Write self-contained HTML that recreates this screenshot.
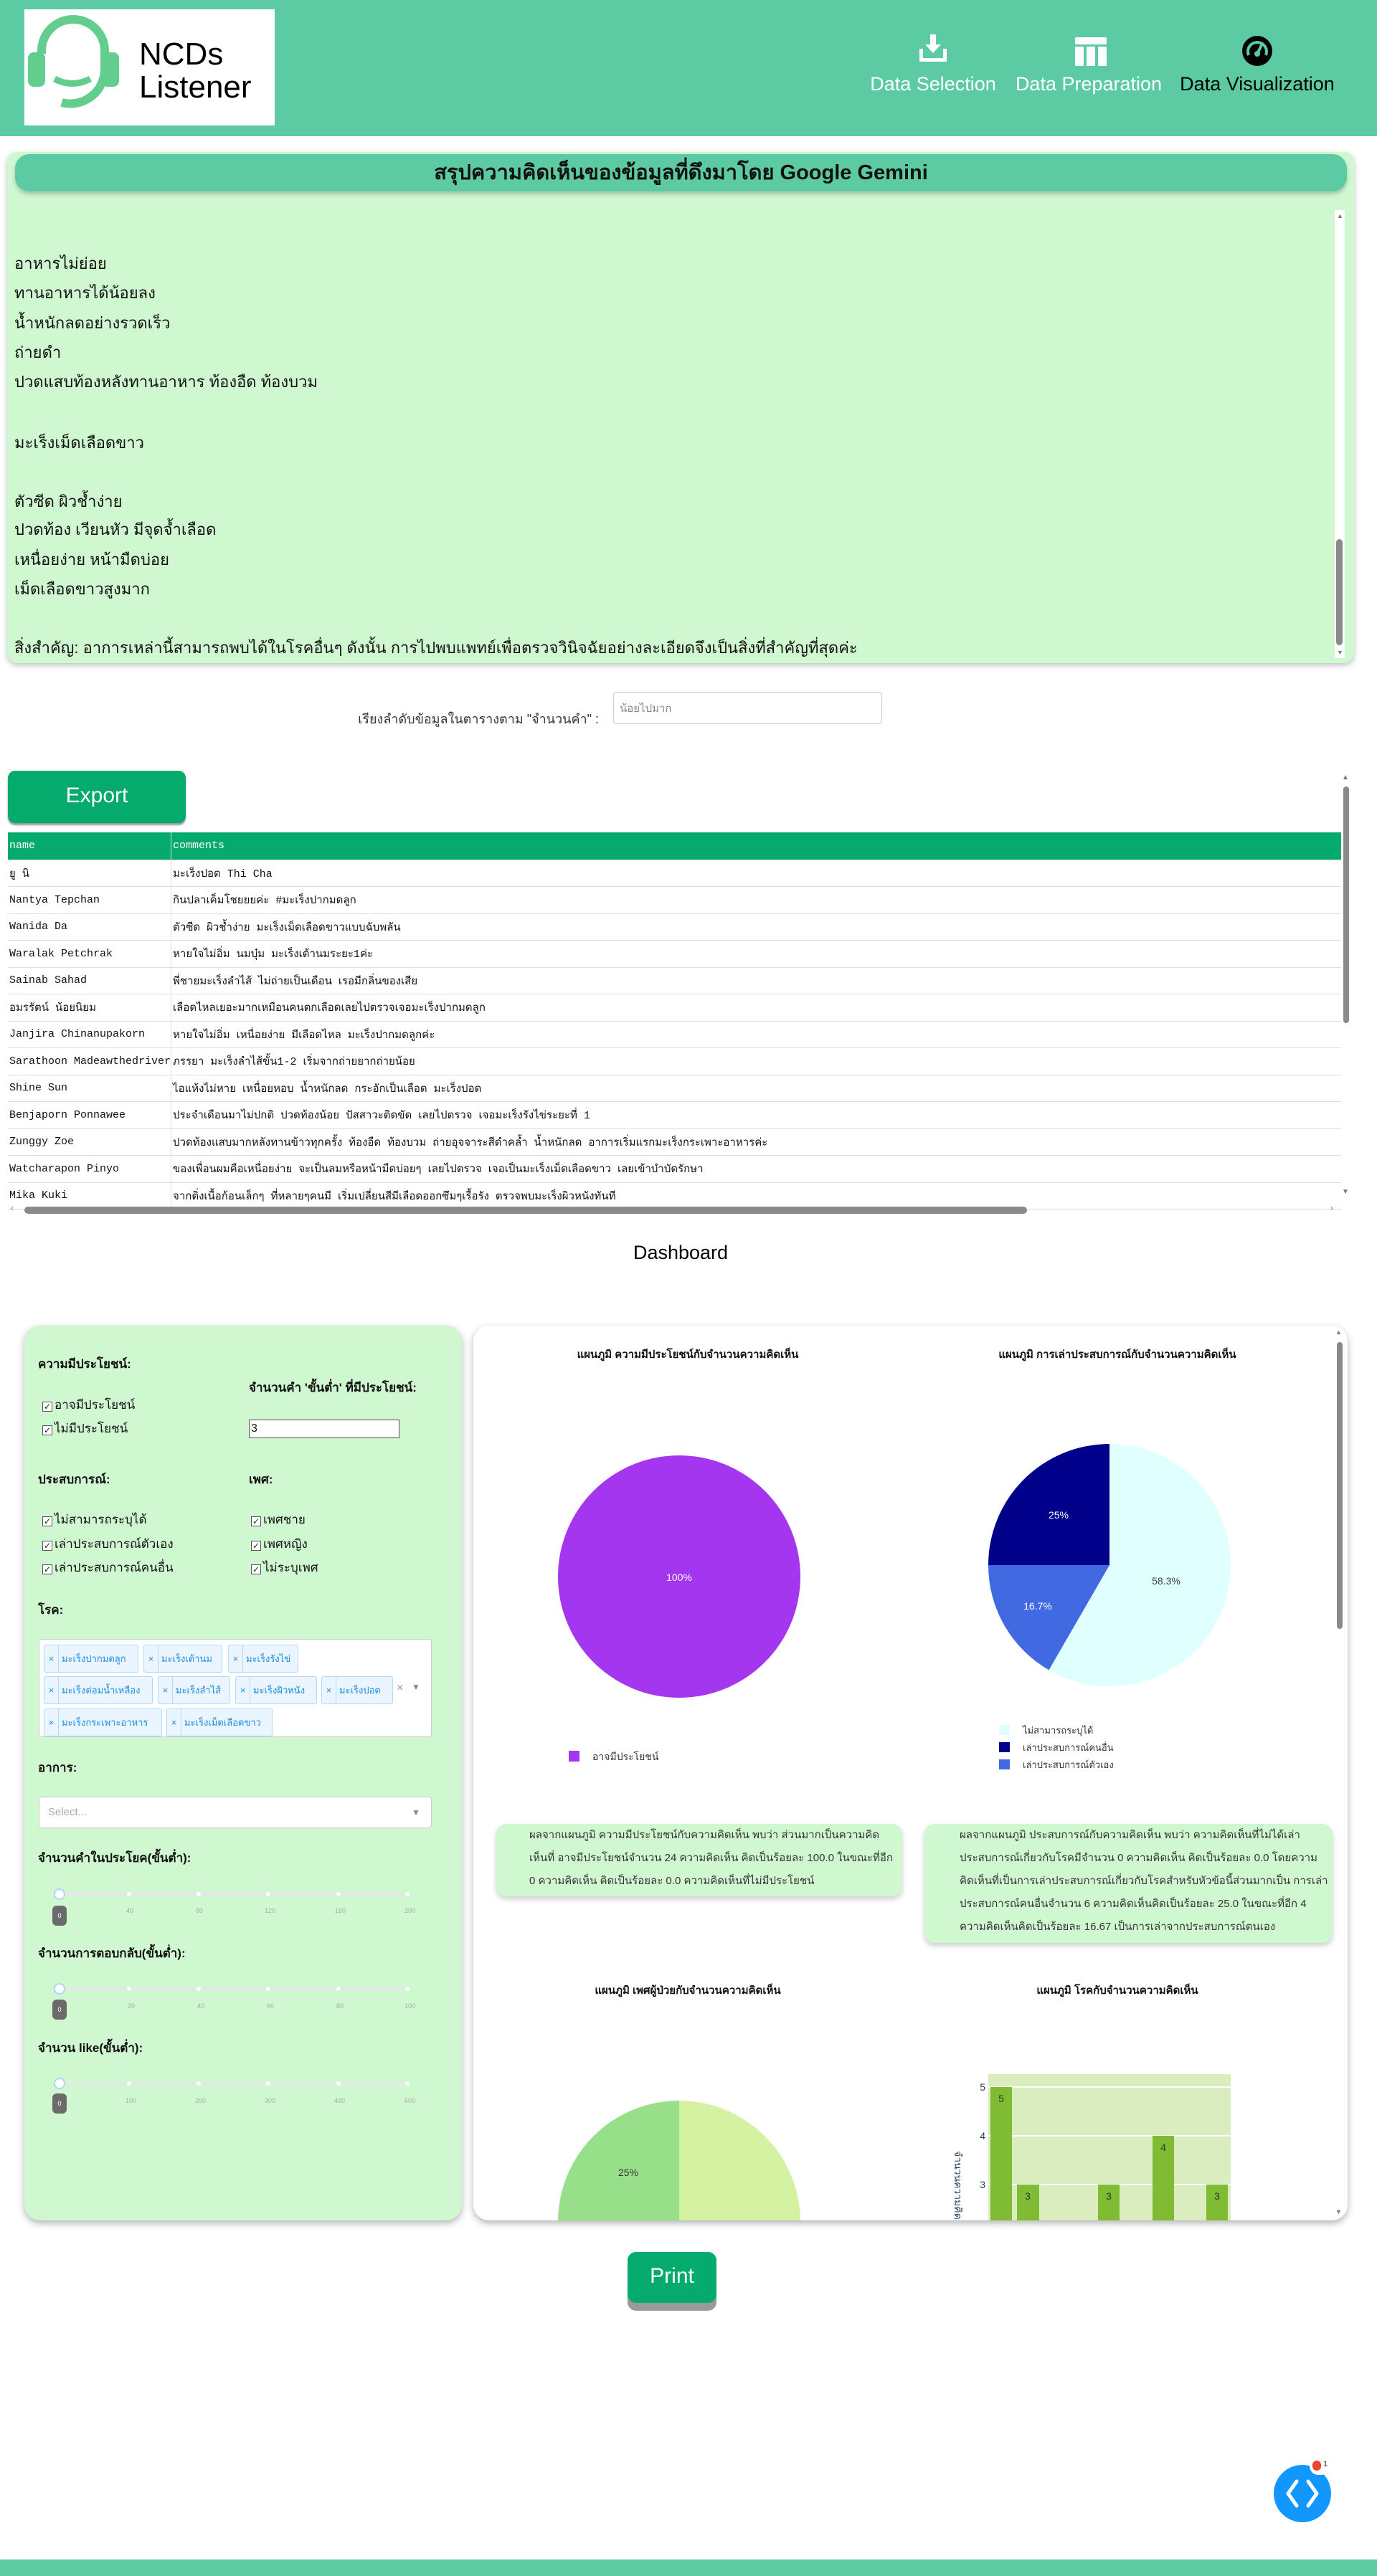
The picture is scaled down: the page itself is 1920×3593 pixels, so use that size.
<!DOCTYPE html>
<html><head><meta charset="utf-8">
<style>
*{margin:0;padding:0;box-sizing:border-box}
html,body{width:1920px;height:3593px;overflow:hidden;background:#fff;font-family:"Liberation Sans","DejaVu Sans",sans-serif;color:#111;position:relative}
.a{position:absolute}
.hdr{left:0;top:0;width:1920px;height:190px;background:#5ccba3}
.logo{left:34px;top:13px;width:349px;height:162px;background:#fff}
.nav{color:#fff;font-size:27px;text-align:center;white-space:nowrap}
.card{left:10px;top:212px;width:1878px;height:713px;background:#cff7d0;border-radius:14px;box-shadow:0 3px 8px rgba(0,0,0,.25)}
.ttl{left:21px;top:215px;width:1857px;height:52px;background:#5ccba3;border-radius:20px;box-shadow:0 4px 6px rgba(0,0,0,.2);font-size:29px;font-weight:bold;text-align:center;line-height:52px}
.ln{left:20px;font-size:22px;white-space:nowrap}
.sb{background:#fff;width:14px}
.thumb{background:#8a8a8a;border-radius:5px}
table{border-collapse:collapse;font-family:"Liberation Mono","DejaVu Sans Mono",monospace;font-size:15px}
td{height:37.5px;border-bottom:1px solid #ddd;padding-left:2px;white-space:nowrap;vertical-align:middle}
td:first-child{width:227px;border-right:1px solid #ddd}
tr.h td{background:#05aa6d;color:#fff;height:38px}
.lp{left:34px;top:1849px;width:610px;height:1248px;background:#cff7d0;border-radius:22px;box-shadow:0 4px 10px rgba(0,0,0,.3)}
.rp{left:660px;top:1849px;width:1219px;height:1248px;background:#fff;border-radius:22px;box-shadow:0 4px 10px rgba(0,0,0,.3);overflow:hidden}
.lb{font-weight:bold;font-size:17px;white-space:nowrap}
.cb{font-size:17px;white-space:nowrap}
.cb i{display:inline-block;width:14px;height:14px;border:1px solid #555;background:#fff;font-style:normal;font-size:12px;line-height:12px;text-align:center;margin-right:3px;vertical-align:-1px;color:#222}
.tag{position:absolute;height:39px;background:#ebf5ff;border:1px solid #b3d8ff;border-radius:3px;color:#1c8de0;font-size:13px;line-height:37px;white-space:nowrap;overflow:hidden}
.tag b{display:inline-block;width:20px;text-align:center;font-weight:normal;border-right:1px solid #b3d8ff;margin-right:4px}
.trk{height:4px;background:#e6e6e6;width:486px;left:83px}
.dot{width:6px;height:6px;border-radius:3px;background:#fff;top:-1px}
.tick{font-size:9px;color:#aaa}
.hdl{width:16px;height:16px;border-radius:8px;background:#fff;border:2px solid #a8d8ff;left:75px;top:-6px}
.val{width:20px;height:28px;background:#6b6b6b;border-radius:6px;color:#fff;font-size:9px;text-align:center;line-height:28px;left:73px}
.ct{font-size:15px;font-weight:bold;white-space:nowrap;transform:translateX(-50%)}
.tb{background:#cff7d0;border-radius:14px;box-shadow:0 4px 8px rgba(0,0,0,.2);font-size:15px;line-height:32px;color:#333}
</style></head><body>

<div class="a hdr"></div>
<div class="a logo">
 <svg class="a" style="left:0;top:0" width="150" height="162" viewBox="0 0 150 162">
  <path d="M52 130 A48 48 0 0 0 112 84 L112 58 A44 44 0 0 0 24 58 L24 62" fill="none" stroke="#63cd8e" stroke-width="12"/>
  <rect x="5" y="60" width="24" height="48" rx="8" fill="#63cd8e"/>
  <rect x="108" y="60" width="24" height="48" rx="8" fill="#63cd8e"/>
  <path d="M42 97 Q67 110 92 97" fill="none" stroke="#63cd8e" stroke-width="9"/>
 </svg>
 <div class="a" style="left:160px;top:40px;font-size:44px;line-height:46px;color:#000">NCDs<br>Listener</div>
</div>
<svg class="a" style="left:1280px;top:48px" width="42" height="40" viewBox="0 0 42 40"><path d="M17 0h8v14h7L21 26 10 14h7z" fill="#fff"/><path d="M2 20v18h38V20h-5v13H7V20z" fill="#fff"/></svg>
<div class="a nav" style="left:1301px;top:102px;transform:translateX(-50%)">Data Selection</div>
<svg class="a" style="left:1499px;top:52px" width="44" height="40" viewBox="0 0 44 40"><rect x="0" y="0" width="44" height="10" rx="2" fill="#fff"/><rect x="0" y="13" width="12" height="27" rx="1" fill="#fff"/><rect x="16" y="13" width="12" height="27" fill="#fff"/><rect x="32" y="13" width="12" height="27" rx="1" fill="#fff"/></svg>
<div class="a nav" style="left:1518px;top:102px;transform:translateX(-50%)">Data Preparation</div>
<svg class="a" style="left:1731px;top:49px" width="44" height="44" viewBox="0 0 44 44"><ellipse cx="22" cy="22" rx="21" ry="21" fill="#000"/><path d="M10 28 A13 13 0 1 1 34 28" fill="none" stroke="#5ccba3" stroke-width="4"/><path d="M22 26 L29 12" stroke="#5ccba3" stroke-width="4"/><circle cx="22" cy="26" r="4" fill="#5ccba3"/></svg>
<div class="a nav" style="left:1753px;top:102px;transform:translateX(-50%);color:#000">Data Visualization</div>

<div class="a card"></div>
<div class="a ttl">สรุปความคิดเห็นของข้อมูลที่ดึงมาโดย Google Gemini</div>
<div class="a sb" style="left:1861px;top:293px;height:625px"></div>
<div class="a" style="left:1864px;top:296px;font-size:9px;color:#777">▲</div>
<div class="a" style="left:1864px;top:905px;font-size:9px;color:#777">▼</div>
<div class="a thumb" style="left:1863px;top:752px;width:9px;height:148px"></div>
<div class="a ln" style="top:350px">อาหารไม่ย่อย</div>
<div class="a ln" style="top:391px">ทานอาหารได้น้อยลง</div>
<div class="a ln" style="top:433px">น้ำหนักลดอย่างรวดเร็ว</div>
<div class="a ln" style="top:474px">ถ่ายดำ</div>
<div class="a ln" style="top:515px">ปวดแสบท้องหลังทานอาหาร ท้องอืด ท้องบวม</div>
<div class="a ln" style="top:600px">มะเร็งเม็ดเลือดขาว</div>
<div class="a ln" style="top:682px">ตัวซีด ผิวช้ำง่าย</div>
<div class="a ln" style="top:721px">ปวดท้อง เวียนหัว มีจุดจ้ำเลือด</div>
<div class="a ln" style="top:763px">เหนื่อยง่าย หน้ามืดบ่อย</div>
<div class="a ln" style="top:804px">เม็ดเลือดขาวสูงมาก</div>
<div class="a ln" style="top:886px">สิ่งสำคัญ: อาการเหล่านี้สามารถพบได้ในโรคอื่นๆ ดังนั้น การไปพบแพทย์เพื่อตรวจวินิจฉัยอย่างละเอียดจึงเป็นสิ่งที่สำคัญที่สุดค่ะ</div>

<div class="a" style="right:1085px;top:988px;font-size:18px;color:#333;white-space:nowrap">เรียงลำดับข้อมูลในตารางตาม "จำนวนคำ" :</div>
<div class="a" style="left:855px;top:965px;width:375px;height:45px;border:1px solid #ccc;border-radius:4px;background:#fff;font-size:15px;color:#888;padding:10px 0 0 8px">น้อยไปมาก</div>

<div class="a" style="left:11px;top:1075px;width:248px;height:73px;background:#05aa6d;border-radius:10px;box-shadow:0 3px 2px #999;color:#fff;font-size:30px;text-align:center;line-height:70px">Export</div>

<div class="a" style="left:11px;top:1161px;width:1859px;height:526px;overflow:hidden">
<table style="width:1859px">
<tr class="h"><td>name</td><td>comments</td></tr>
<tr><td>ยู นิ</td><td>มะเร็งปอด Thi Cha</td></tr>
<tr><td>Nantya Tepchan</td><td>กินปลาเค็มโชยยยค่ะ #มะเร็งปากมดลูก</td></tr>
<tr><td>Wanida Da</td><td>ตัวซีด ผิวช้ำง่าย มะเร็งเม็ดเลือดขาวแบบฉับพลัน</td></tr>
<tr><td>Waralak Petchrak</td><td>หายใจไม่อิ่ม นมบุ๋ม มะเร็งเต้านมระยะ1ค่ะ</td></tr>
<tr><td>Sainab Sahad</td><td>พี่ชายมะเร็งลำไส้ ไม่ถ่ายเป็นเดือน เรอมีกลิ่นของเสีย</td></tr>
<tr><td>อมรรัตน์ น้อยนิยม</td><td>เลือดไหลเยอะมากเหมือนคนตกเลือดเลยไปตรวจเจอมะเร็งปากมดลูก</td></tr>
<tr><td>Janjira Chinanupakorn</td><td>หายใจไม่อิ่ม เหนื่อยง่าย มีเลือดไหล มะเร็งปากมดลูกค่ะ</td></tr>
<tr><td>Sarathoon Madeawthedriver</td><td>ภรรยา มะเร็งลำไส้ขั้น1-2 เริ่มจากถ่ายยากถ่ายน้อย</td></tr>
<tr><td>Shine Sun</td><td>ไอแห้งไม่หาย เหนื่อยหอบ น้ำหนักลด กระอักเป็นเลือด มะเร็งปอด</td></tr>
<tr><td>Benjaporn Ponnawee</td><td>ประจำเดือนมาไม่ปกติ ปวดท้องน้อย ปัสสาวะติดขัด เลยไปตรวจ เจอมะเร็งรังไข่ระยะที่ 1</td></tr>
<tr><td>Zunggy Zoe</td><td>ปวดท้องแสบมากหลังทานข้าวทุกครั้ง ท้องอืด ท้องบวม ถ่ายอุจจาระสีดำคล้ำ น้ำหนักลด อาการเริ่มแรกมะเร็งกระเพาะอาหารค่ะ</td></tr>
<tr><td>Watcharapon Pinyo</td><td>ของเพื่อนผมคือเหนื่อยง่าย จะเป็นลมหรือหน้ามืดบ่อยๆ เลยไปตรวจ เจอเป็นมะเร็งเม็ดเลือดขาว เลยเข้าบำบัดรักษา</td></tr>
<tr><td>Mika Kuki</td><td>จากติ่งเนื้อก้อนเล็กๆ ที่หลายๆคนมี เริ่มเปลี่ยนสีมีเลือดออกซึมๆเรื้อรัง ตรวจพบมะเร็งผิวหนังทันที</td></tr>
</table></div>
<div class="a sb" style="left:1870px;top:1075px;height:600px"></div>
<div class="a thumb" style="left:1873px;top:1097px;width:8px;height:330px"></div>
<div class="a" style="left:1871px;top:1079px;font-size:10px;color:#777">▲</div>
<div class="a" style="left:1871px;top:1657px;font-size:10px;color:#777">▼</div>
<div class="a thumb" style="left:34px;top:1683px;width:1398px;height:10px"></div>
<div class="a" style="left:15px;top:1678px;font-size:12px;color:#777">‹</div>
<div class="a" style="left:1855px;top:1678px;font-size:12px;color:#777">›</div>

<div class="a" style="left:949px;top:1732px;transform:translateX(-50%);font-size:27px;color:#000">Dashboard</div>

<div class="a lp"></div>
<div class="a lb" style="left:53px;top:1889px">ความมีประโยชน์:</div>
<div class="a lb" style="left:347px;top:1922px">จำนวนคำ 'ขั้นต่ำ' ที่มีประโยชน์:</div>
<div class="a cb" style="left:59px;top:1946px"><i>✓</i>อาจมีประโยชน์</div>
<div class="a cb" style="left:59px;top:1979px"><i>✓</i>ไม่มีประโยชน์</div>
<div class="a" style="left:347px;top:1980px;width:210px;height:26px;background:#fff;border:1px solid #555;font-size:16px;padding:3px 2px">3</div>
<div class="a lb" style="left:53px;top:2050px">ประสบการณ์:</div>
<div class="a lb" style="left:347px;top:2050px">เพศ:</div>
<div class="a cb" style="left:59px;top:2106px"><i>✓</i>ไม่สามารถระบุได้</div>
<div class="a cb" style="left:59px;top:2140px"><i>✓</i>เล่าประสบการณ์ตัวเอง</div>
<div class="a cb" style="left:59px;top:2173px"><i>✓</i>เล่าประสบการณ์คนอื่น</div>
<div class="a cb" style="left:350px;top:2106px"><i>✓</i>เพศชาย</div>
<div class="a cb" style="left:350px;top:2140px"><i>✓</i>เพศหญิง</div>
<div class="a cb" style="left:350px;top:2173px"><i>✓</i>ไม่ระบุเพศ</div>
<div class="a lb" style="left:53px;top:2232px">โรค:</div>
<div class="a" style="left:54px;top:2286px;width:548px;height:137px;background:#fff;border:1px solid #ccc;border-radius:4px"></div>
<div class="tag" style="left:61px;top:2294px;width:132px"><b>×</b>มะเร็งปากมดลูก</div>
<div class="tag" style="left:200px;top:2294px;width:110px"><b>×</b>มะเร็งเต้านม</div>
<div class="tag" style="left:318px;top:2294px;width:98px"><b>×</b>มะเร็งรังไข่</div>
<div class="tag" style="left:61px;top:2338px;width:152px"><b>×</b>มะเร็งต่อมน้ำเหลือง</div>
<div class="tag" style="left:220px;top:2338px;width:101px"><b>×</b>มะเร็งลำไส้</div>
<div class="tag" style="left:328px;top:2338px;width:114px"><b>×</b>มะเร็งผิวหนัง</div>
<div class="tag" style="left:448px;top:2338px;width:100px"><b>×</b>มะเร็งปอด</div>
<div class="a" style="left:553px;top:2346px;font-size:16px;color:#999">×</div>
<div class="a" style="left:574px;top:2346px;font-size:12px;color:#888">▼</div>
<div class="tag" style="left:61px;top:2383px;width:165px"><b>×</b>มะเร็งกระเพาะอาหาร</div>
<div class="tag" style="left:232px;top:2383px;width:148px"><b>×</b>มะเร็งเม็ดเลือดขาว</div>
<div class="a lb" style="left:53px;top:2452px">อาการ:</div>
<div class="a" style="left:54px;top:2506px;width:548px;height:44px;background:#fff;border:1px solid #ccc;border-radius:4px;font-size:15px;color:#aaa;padding:12px 0 0 12px">Select...</div>
<div class="a" style="left:574px;top:2521px;font-size:12px;color:#888">▼</div>

<div class="a lb" style="left:53px;top:2578px">จำนวนคำในประโยค(ขั้นต่ำ):</div>
<div class="a trk" style="top:2640px"><div class="a dot" style="left:94px"></div><div class="a dot" style="left:191px"></div><div class="a dot" style="left:288px"></div><div class="a dot" style="left:386px"></div><div class="a dot" style="left:482px"></div></div>
<div class="a hdl" style="top:2634px"></div>
<div class="a val" style="top:2658px">0</div>
<div class="a tick" style="left:176px;top:2660px">40</div><div class="a tick" style="left:273px;top:2660px">80</div><div class="a tick" style="left:369px;top:2660px">120</div><div class="a tick" style="left:467px;top:2660px">160</div><div class="a tick" style="left:564px;top:2660px">200</div>

<div class="a lb" style="left:53px;top:2711px">จำนวนการตอบกลับ(ขั้นต่ำ):</div>
<div class="a trk" style="top:2772px"><div class="a dot" style="left:94px"></div><div class="a dot" style="left:191px"></div><div class="a dot" style="left:288px"></div><div class="a dot" style="left:386px"></div><div class="a dot" style="left:482px"></div></div>
<div class="a hdl" style="top:2766px"></div>
<div class="a val" style="top:2789px">0</div>
<div class="a tick" style="left:178px;top:2793px">20</div><div class="a tick" style="left:275px;top:2793px">40</div><div class="a tick" style="left:372px;top:2793px">60</div><div class="a tick" style="left:469px;top:2793px">80</div><div class="a tick" style="left:564px;top:2793px">100</div>

<div class="a lb" style="left:53px;top:2843px">จำนวน like(ขั้นต่ำ):</div>
<div class="a trk" style="top:2904px"><div class="a dot" style="left:94px"></div><div class="a dot" style="left:191px"></div><div class="a dot" style="left:288px"></div><div class="a dot" style="left:386px"></div><div class="a dot" style="left:482px"></div></div>
<div class="a hdl" style="top:2898px"></div>
<div class="a val" style="top:2920px">0</div>
<div class="a tick" style="left:175px;top:2925px">100</div><div class="a tick" style="left:272px;top:2925px">200</div><div class="a tick" style="left:369px;top:2925px">300</div><div class="a tick" style="left:466px;top:2925px">400</div><div class="a tick" style="left:564px;top:2925px">500</div>

<div class="a rp"></div>
<div class="a thumb" style="left:1864px;top:1872px;width:8px;height:400px"></div>
<div class="a" style="left:1862px;top:1853px;font-size:9px;color:#777">▲</div>
<div class="a" style="left:1862px;top:3080px;font-size:9px;color:#777">▼</div>
<div class="a ct" style="left:959px;top:1877px">แผนภูมิ ความมีประโยชน์กับจำนวนความคิดเห็น</div>
<div class="a ct" style="left:1558px;top:1877px">แผนภูมิ การเล่าประสบการณ์กับจำนวนความคิดเห็น</div>
<svg class="a" style="left:0;top:0" width="1920" height="3593">
 <defs><clipPath id="cp"><rect x="660" y="1849" width="1219" height="1248"/></clipPath></defs>
 <g clip-path="url(#cp)">
 <circle cx="947" cy="2199" r="169" fill="#a336ee"/>
 <text x="947" y="2205" fill="#fff" font-size="14" text-anchor="middle" font-family="Liberation Sans">100%</text>
 <path d="M1547,2183 L1547,2014 A169,169 0 1 1 1462.5,2329.4 Z" fill="#e0ffff"/>
 <path d="M1547,2183 L1462.5,2329.4 A169,169 0 0 1 1378,2183 Z" fill="#4169e1"/>
 <path d="M1547,2183 L1378,2183 A169,169 0 0 1 1547,2014 Z" fill="#00008b"/>
 <text x="1476" y="2118" fill="#fff" font-size="14" text-anchor="middle" font-family="Liberation Sans">25%</text>
 <text x="1447" y="2245" fill="#fff" font-size="14" text-anchor="middle" font-family="Liberation Sans">16.7%</text>
 <text x="1626" y="2210" fill="#444" font-size="14" text-anchor="middle" font-family="Liberation Sans">58.3%</text>
 <rect x="793" y="2442" width="15" height="15" fill="#a336ee"/>
 <text x="826" y="2455" font-size="14" fill="#333" font-family="Liberation Sans">อาจมีประโยชน์</text>
 <rect x="1393" y="2406" width="15" height="14" fill="#e0ffff"/>
 <rect x="1393" y="2430" width="15" height="14" fill="#00008b"/>
 <rect x="1393" y="2454" width="15" height="14" fill="#4169e1"/>
 <text x="1426" y="2418" font-size="13" fill="#333" font-family="Liberation Sans">ไม่สามารถระบุได้</text>
 <text x="1426" y="2442" font-size="13" fill="#333" font-family="Liberation Sans">เล่าประสบการณ์คนอื่น</text>
 <text x="1426" y="2466" font-size="13" fill="#333" font-family="Liberation Sans">เล่าประสบการณ์ตัวเอง</text>
 <path d="M947,3099 L947,2930 A169,169 0 0 0 778,3099 Z" fill="#98df8a"/>
 <path d="M947,3099 L947,2930 A169,169 0 0 1 1116,3099 Z" fill="#d4f2a2"/>
 <text x="876" y="3035" font-size="14" fill="#333" text-anchor="middle" font-family="Liberation Sans">25%</text>
 <rect x="1378" y="2893" width="338" height="210" fill="#d9edbe"/>
 <line x1="1378" y1="2911" x2="1716" y2="2911" stroke="#fff" stroke-width="2"/>
 <line x1="1378" y1="2979" x2="1716" y2="2979" stroke="#fff" stroke-width="2"/>
 <line x1="1378" y1="3047" x2="1716" y2="3047" stroke="#fff" stroke-width="2"/>
 <rect x="1381" y="2911" width="30" height="200" fill="#7fbc33"/>
 <rect x="1418" y="3047" width="31" height="60" fill="#7fbc33"/>
 <rect x="1531" y="3047" width="30" height="60" fill="#7fbc33"/>
 <rect x="1607" y="2979" width="30" height="130" fill="#7fbc33"/>
 <rect x="1682" y="3047" width="30" height="60" fill="#7fbc33"/>
 <g font-size="14" fill="#333" font-family="Liberation Sans" text-anchor="middle">
 <text x="1396" y="2932">5</text><text x="1433" y="3068">3</text><text x="1546" y="3068">3</text><text x="1622" y="3000">4</text><text x="1697" y="3068">3</text>
 </g>
 <g font-size="14" fill="#2a3f5f" font-family="Liberation Sans" text-anchor="end">
 <text x="1374" y="2916">5</text><text x="1374" y="2984">4</text><text x="1374" y="3052">3</text>
 </g>
 <text transform="translate(1331,3000) rotate(90)" font-size="14" fill="#2a3f5f" font-family="Liberation Sans">จำนวนความคิดเห็น</text>
 </g>
</svg>
<div class="a tb" style="left:692px;top:2544px;width:566px;height:101px;padding:0 10px 0 46px">ผลจากแผนภูมิ ความมีประโยชน์กับความคิดเห็น พบว่า ส่วนมากเป็นความคิดเห็นที่ อาจมีประโยชน์จำนวน 24 ความคิดเห็น คิดเป็นร้อยละ 100.0 ในขณะที่อีก 0 ความคิดเห็น คิดเป็นร้อยละ 0.0 ความคิดเห็นที่ไม่มีประโยชน์</div>
<div class="a tb" style="left:1289px;top:2544px;width:569px;height:166px;padding:0 4px 0 49px">ผลจากแผนภูมิ ประสบการณ์กับความคิดเห็น พบว่า ความคิดเห็นที่ไม่ได้เล่าประสบการณ์เกี่ยวกับโรคมีจำนวน 0 ความคิดเห็น คิดเป็นร้อยละ 0.0 โดยความคิดเห็นที่เป็นการเล่าประสบการณ์เกี่ยวกับโรคสำหรับหัวข้อนี้ส่วนมากเป็น การเล่าประสบการณ์คนอื่นจำนวน 6 ความคิดเห็นคิดเป็นร้อยละ 25.0 ในขณะที่อีก 4 ความคิดเห็นคิดเป็นร้อยละ 16.67 เป็นการเล่าจากประสบการณ์ตนเอง</div>
<div class="a ct" style="left:959px;top:2764px">แผนภูมิ เพศผู้ป่วยกับจำนวนความคิดเห็น</div>
<div class="a ct" style="left:1558px;top:2764px">แผนภูมิ โรคกับจำนวนความคิดเห็น</div>

<div class="a" style="left:875px;top:3141px;width:124px;height:82px;background:#9a9a9a;border-radius:12px"></div>
<div class="a" style="left:875px;top:3141px;width:124px;height:71px;background:#05aa6d;border-radius:12px;color:#fff;font-size:30px;text-align:center;line-height:68px">Print</div>

<div class="a" style="left:1776px;top:3438px;width:80px;height:80px;border-radius:40px;background:#1296ff"></div>
<svg class="a" style="left:1790px;top:3455px" width="52" height="46" viewBox="0 0 52 46"><path d="M18 6 L6 23 L18 40 M34 6 L46 23 L34 40" fill="none" stroke="#fff" stroke-width="5" stroke-linejoin="round" stroke-linecap="round"/></svg>
<div class="a" style="left:1826px;top:3428px;width:28px;height:24px;border-radius:12px;background:#fff"></div>
<div class="a" style="left:1830px;top:3432px;width:12px;height:14px;border-radius:6px;background:#e8452c"></div>
<div class="a" style="left:1845px;top:3431px;font-size:11px;color:#333">1</div>

<div class="a" style="left:0;top:3570px;width:1920px;height:23px;background:#5ccba3"></div>
</body></html>
